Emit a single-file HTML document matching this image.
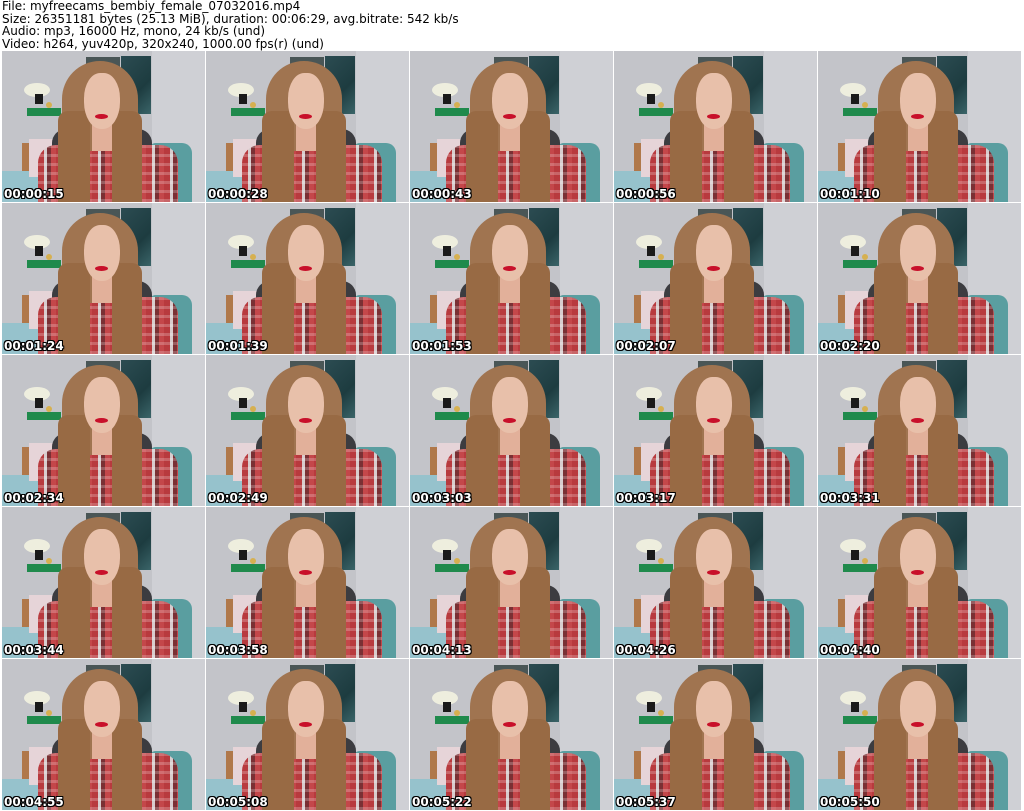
<!DOCTYPE html>
<html><head><meta charset="utf-8"><style>
body{margin:0;width:1024px;height:811px;background:#fff;overflow:hidden;position:relative;font-family:"DejaVu Sans","Liberation Sans",sans-serif}
.hd{position:absolute;left:2px;top:0;font-size:12px;line-height:12.5px;color:#000;white-space:pre}
.t{position:absolute;width:203px;height:151px;overflow:hidden;background:#c3c4c9}
.t div{position:absolute}
.rw{left:150px;top:0;width:53px;height:151px;background:#cfd0d5}
.f1{left:84px;top:6px;width:34px;height:44px;background:#4a5656}
.f2{left:119px;top:5px;width:30px;height:58px;background:linear-gradient(135deg,#2c4c52,#1d3c40 60%,#3a6468)}
.sh{left:25px;top:57px;width:34px;height:8px;background:#1f8a4c}
.pot{left:33px;top:43px;width:8px;height:10px;background:#1a1a1a}
.fl{left:22px;top:32px;width:26px;height:14px;background:#eeeede;border-radius:50%}
.cn{left:44px;top:51px;width:6px;height:6px;background:#d6b050;border-radius:50%}
.bw{left:20px;top:92px;width:12px;height:34px;background:#b0784a}
.bd{left:0;top:120px;width:45px;height:31px;background:#96c2cc}
.pl{left:27px;top:88px;width:24px;height:38px;background:#e6d4d8}
.co{left:146px;top:92px;width:44px;height:59px;background:#5a9ea0;border-radius:8px 10px 0 0}
.ch{left:50px;top:78px;width:100px;height:73px;background:#3c3c40;border-radius:14px 14px 0 0}
.sr{left:36px;top:94px;width:140px;height:57px;border-radius:18px 18px 0 0;background:repeating-linear-gradient(90deg,#b83a3e 0 6px,#d8cccd 6px 9px,#7a3034 9px 13px,#c4474a 13px 18px),#b8262c}
.sr2{left:36px;top:94px;width:140px;height:57px;border-radius:18px 18px 0 0;background:repeating-linear-gradient(0deg,rgba(255,255,255,.22) 0 3px,transparent 3px 9px)}
.hr{left:60px;top:10px;width:76px;height:90px;background:#a07450;border-radius:38px 38px 10px 10px}
.sl{left:56px;top:60px;width:32px;height:91px;background:#986a44;border-radius:10px 6px 0 0}
.sR{left:110px;top:60px;width:30px;height:91px;background:#986a44;border-radius:6px 10px 0 0}
.nk{left:90px;top:70px;width:20px;height:30px;background:#e2b09a}
.fc{left:82px;top:22px;width:36px;height:56px;background:#e8c0aa;border-radius:45% 45% 48% 48%}
.lp{left:93px;top:63px;width:13px;height:5px;background:#c8102a;border-radius:50%}
.ts{position:absolute;left:2px;bottom:1px;font-weight:bold;font-size:12px;color:#fff;text-shadow:1px 0 #000,-1px 0 #000,0 1px #000,0 -1px #000,1px 1px #000,-1px -1px #000,1px -1px #000,-1px 1px #000}
</style></head><body>
<div class="hd">File: myfreecams_bembiy_female_07032016.mp4
Size: 26351181 bytes (25.13 MiB), duration: 00:06:29, avg.bitrate: 542 kb/s
Audio: mp3, 16000 Hz, mono, 24 kb/s (und)
Video: h264, yuv420p, 320x240, 1000.00 fps(r) (und)</div>
<div id="g"></div>
<script>
var times=["00:00:15","00:00:28","00:00:43","00:00:56","00:01:10","00:01:24","00:01:39","00:01:53","00:02:07","00:02:20","00:02:34","00:02:49","00:03:03","00:03:17","00:03:31","00:03:44","00:03:58","00:04:13","00:04:26","00:04:40","00:04:55","00:05:08","00:05:22","00:05:37","00:05:50"];
var inner='<div class="rw"></div><div class="f1"></div><div class="f2"></div><div class="sh"></div><div class="fl"></div><div class="pot"></div><div class="cn"></div><div class="bw"></div><div class="bd"></div><div class="pl"></div><div class="co"></div><div class="ch"></div><div class="sr"></div><div class="sr2"></div><div class="hr"></div><div class="sl"></div><div class="sR"></div><div class="nk"></div><div class="fc"></div><div class="lp"></div>';
var h='';
for(var i=0;i<25;i++){var c=i%5,r=Math.floor(i/5);
h+='<div class="t" style="left:'+(2+c*204)+'px;top:'+(51+r*152)+'px">'+inner+'<span class="ts">'+times[i]+'</span></div>';}
document.getElementById('g').innerHTML=h;
</script>
</body></html>
